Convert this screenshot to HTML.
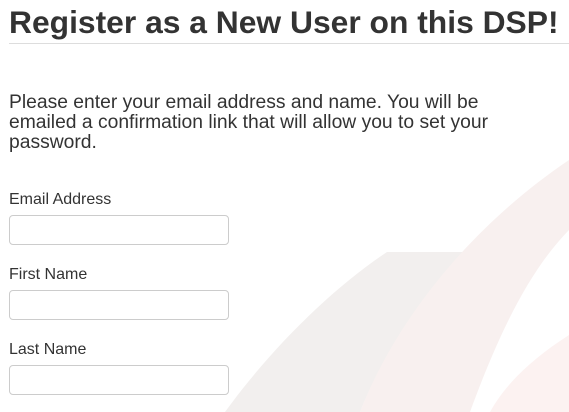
<!DOCTYPE html>
<html><head><meta charset="utf-8"><style>
html,body{margin:0;padding:0;width:569px;height:412px;overflow:hidden;background:#fff;font-family:"Liberation Sans",sans-serif;color:#333;position:relative}
svg.bg{position:absolute;left:0;top:0}
h1{position:absolute;left:9px;top:3px;margin:0;font-size:31.8px;font-weight:bold;line-height:38px;white-space:nowrap}
.rule{position:absolute;left:9px;right:0;top:43px;height:1px;background:#ddd}
p{position:absolute;left:9px;top:93px;margin:0;font-size:19.3px;line-height:20px;width:485px}
label{position:absolute;left:9px;font-size:16px;line-height:20px}
.in{position:absolute;left:9px;width:218px;height:28px;border:1px solid #ccc;border-radius:4px;background:#fff}
</style></head><body>
<svg class="bg" width="569" height="412" viewBox="0 0 569 412">
<path d="M387 252 L470 252 C420 300 385 350 360 412 L225 412 C270 350 330 290 387 252 Z" fill="#f2efee"/>
<path d="M569 160 C480 220 400 310 360 412 L470 412 C500 330 530 270 569 230 Z" fill="#f8f0ef"/>
<path d="M569 335 C530 360 505 385 490 412 L569 412 Z" fill="#fcf2f1"/>
</svg>
<h1>Register as a New User on this DSP!</h1>
<div class="rule"></div>
<p>Please enter your email address and name. You will be emailed a confirmation link that will allow you to set your password.</p>
<label style="top:190px">Email Address</label>
<div class="in" style="top:215px"></div>
<label style="top:265px">First Name</label>
<div class="in" style="top:290px"></div>
<label style="top:340px">Last Name</label>
<div class="in" style="top:365px"></div>
</body></html>
